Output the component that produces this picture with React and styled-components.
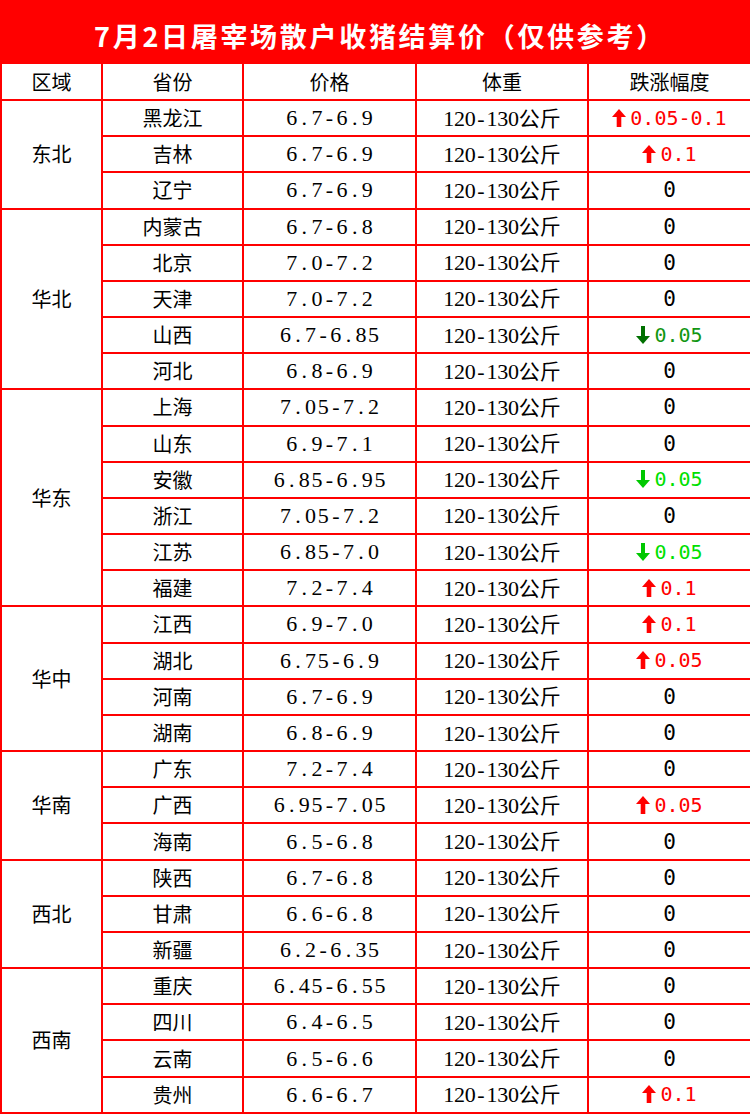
import React from "react";
import styled, { createGlobalStyle } from "styled-components";

const Global = createGlobalStyle`
  html, body { margin: 0; padding: 0; background: #fff; }
  body { font-family: "Noto Sans CJK SC", "Liberation Sans", sans-serif; }
`;

const Page = styled.div`
  width: 750px;
  background: #fff;
`;

const Title = styled.div`
  height: 62px;
  box-sizing: border-box;
  padding: 17px 0 0 10px;
  background: #ff0000;
  color: #fff;
  text-align: center;
  font-family: "Noto Sans CJK SC", sans-serif;
  font-weight: 700;
  font-size: 27px;
  line-height: 38px;
  letter-spacing: 2.7px;
  white-space: nowrap;
`;

const Table = styled.table`
  width: 750px;
  table-layout: fixed;
  border-collapse: collapse;
  font-family: "Noto Sans CJK SC", sans-serif;
  color: #000;
`;

const HeadRow = styled.tr`
  height: 37px;
`;

const Row = styled.tr`
  height: 36.18px;
`;

const Cell = styled.td`
  border: 2px solid #ff0000;
  padding: 0;
  text-align: center;
  vertical-align: middle;
  font-size: 20px;
  line-height: 1;
  white-space: nowrap;
`;

const Th = styled.th`
  border: 2px solid #ff0000;
  padding: 0;
  text-align: center;
  vertical-align: middle;
  font-weight: 400;
  font-size: 20px;
  line-height: 1;
`;

const Glyph = styled.span`
  display: inline-block;
  width: ${(p) => p.$w}px;
  text-align: center;
  font-family: "Liberation Serif", serif;
  font-size: ${(p) => p.$size}px;
  line-height: 1;
`;

const HalfWidth = ({ text, w, size }) => (
  <>
    {text.split("").map((c, i) => (
      <Glyph key={i} $w={w} $size={size}>{c}</Glyph>
    ))}
  </>
);

const WeightUnit = styled.span`
  font-family: "Noto Sans CJK SC", sans-serif;
  font-size: 21px;
`;

const Change = styled.span`
  display: inline-flex;
  align-items: center;
  gap: 4px;
  font-family: "DejaVu Sans Mono", monospace;
  font-size: 20px;
  color: ${(p) => p.$color};
`;

const Zero = styled.span`
  font-family: "DejaVu Sans Mono", monospace;
  font-size: 21px;
  color: #000;
`;

const ArrowSvg = styled.svg`
  width: 14px;
  height: 18px;
  flex: none;
`;

const Arrow = ({ dir, color }) => (
  <ArrowSvg viewBox="0 0 14 18">
    {dir === "up" ? (
      <path d="M7 0 L14 8 L9.3 8 L9.3 18 L4.7 18 L4.7 8 L0 8 Z" fill={color} />
    ) : (
      <path d="M7 18 L14 10 L9 10 L9 0 L5 0 L5 10 L0 10 Z" fill={color} />
    )}
  </ArrowSvg>
);

const styles = {
  up: { dir: "up", arrow: "#ff0000", text: "#ff0000" },
  downDark: { dir: "down", arrow: "#007000", text: "#129612" },
  down: { dir: "down", arrow: "#00c800", text: "#00e000" },
};

const data = [
  { region: "东北", items: [
    ["黑龙江", "6.7-6.9", "up", "0.05-0.1"],
    ["吉林", "6.7-6.9", "up", "0.1"],
    ["辽宁", "6.7-6.9"],
  ]},
  { region: "华北", items: [
    ["内蒙古", "6.7-6.8"],
    ["北京", "7.0-7.2"],
    ["天津", "7.0-7.2"],
    ["山西", "6.7-6.85", "downDark", "0.05"],
    ["河北", "6.8-6.9"],
  ]},
  { region: "华东", items: [
    ["上海", "7.05-7.2"],
    ["山东", "6.9-7.1"],
    ["安徽", "6.85-6.95", "down", "0.05"],
    ["浙江", "7.05-7.2"],
    ["江苏", "6.85-7.0", "down", "0.05"],
    ["福建", "7.2-7.4", "up", "0.1"],
  ]},
  { region: "华中", items: [
    ["江西", "6.9-7.0", "up", "0.1"],
    ["湖北", "6.75-6.9", "up", "0.05"],
    ["河南", "6.7-6.9"],
    ["湖南", "6.8-6.9"],
  ]},
  { region: "华南", items: [
    ["广东", "7.2-7.4"],
    ["广西", "6.95-7.05", "up", "0.05"],
    ["海南", "6.5-6.8"],
  ]},
  { region: "西北", items: [
    ["陕西", "6.7-6.8"],
    ["甘肃", "6.6-6.8"],
    ["新疆", "6.2-6.35"],
  ]},
  { region: "西南", items: [
    ["重庆", "6.45-6.55"],
    ["四川", "6.4-6.5"],
    ["云南", "6.5-6.6"],
    ["贵州", "6.6-6.7", "up", "0.1"],
  ]},
];

const ChangeCell = ({ kind, value }) => {
  if (!kind) return <Zero>0</Zero>;
  const s = styles[kind];
  return (
    <Change $color={s.text}>
      <Arrow dir={s.dir} color={s.arrow} />
      {value}
    </Change>
  );
};

export default function App() {
  return (
    <Page>
      <Global />
      <Title>7月2日屠宰场散户收猪结算价（仅供参考）</Title>
      <Table>
        <colgroup>
          <col style={{ width: 101 }} />
          <col style={{ width: 141 }} />
          <col style={{ width: 173 }} />
          <col style={{ width: 172 }} />
          <col style={{ width: 163 }} />
        </colgroup>
        <thead>
          <HeadRow>
            <Th>区域</Th>
            <Th>省份</Th>
            <Th>价格</Th>
            <Th>体重</Th>
            <Th>跌涨幅度</Th>
          </HeadRow>
        </thead>
        <tbody>
          {data.map((g) =>
            g.items.map((it, i) => (
              <Row key={it[0]}>
                {i === 0 && <Cell rowSpan={g.items.length}>{g.region}</Cell>}
                <Cell>{it[0]}</Cell>
                <Cell><HalfWidth text={it[1]} w={12.6} size={22} /></Cell>
                <Cell>
                  <HalfWidth text="120-130" w={10.8} size={22} />
                  <WeightUnit>公斤</WeightUnit>
                </Cell>
                <Cell><ChangeCell kind={it[2]} value={it[3]} /></Cell>
              </Row>
            ))
          )}
        </tbody>
      </Table>
    </Page>
  );
}
